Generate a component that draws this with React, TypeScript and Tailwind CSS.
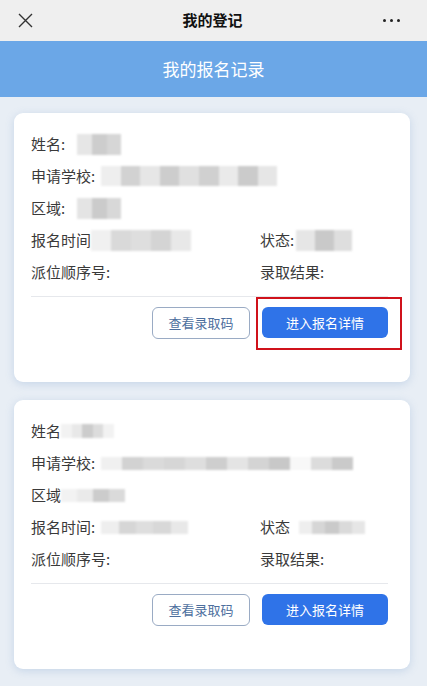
import type { ReactNode } from 'react';

type Blur = { w: number; tones: string[]; cls: string };

function Redacted({ w, tones, cls }: Blur) {
  return (
    <span className={`inline-flex overflow-hidden blur-[1px] ${cls}`} style={{ width: w }}>
      {tones.map((t, i) => (
        <span key={i} className="h-full flex-1" style={{ backgroundColor: t }} />
      ))}
    </span>
  );
}

function Row({ children }: { children: ReactNode }) {
  return <div className="flex h-8 items-center">{children}</div>;
}

type Record = {
  nameLabel: string;
  name: Blur;
  school: Blur;
  areaLabel: string;
  area: Blur;
  timeLabel: string;
  time: Blur;
  statusLabel: string;
  status: Blur;
  highlight?: boolean;
};

const records: Record[] = [
  {
    nameLabel: '姓名:',
    name: { w: 44, cls: 'ml-[12px] h-[21px]', tones: ['#e6e6e6', '#cdcdcd', '#d6d6d6'] },
    school: { w: 176, cls: 'ml-[6px] h-[20px]', tones: ['#eeeeee', '#d2d2d2', '#e6e6e6', '#cdcdcd', '#e0e0e0', '#d0d0d0', '#eaeaea', '#cbcbcb', '#e6e6e6'] },
    areaLabel: '区域:',
    area: { w: 44, cls: 'ml-[12px] h-[21px]', tones: ['#e4e4e4', '#cbcbcb', '#d8d8d8'] },
    timeLabel: '报名时间',
    time: { w: 100, cls: 'ml-0 h-[21px]', tones: ['#f0f0f0', '#d9d9d9', '#dedede', '#d4d4d4', '#e8e8e8'] },
    statusLabel: '状态:',
    status: { w: 56, cls: 'ml-[2px] h-[21px]', tones: ['#e6e6e6', '#c9c9c9', '#dedede'] },
    highlight: true,
  },
  {
    nameLabel: '姓名',
    name: { w: 53, cls: 'ml-0 h-[14px]', tones: ['#f2f2f2', '#e8e8e8', '#cccccc', '#dcdcdc', '#f2f2f2'] },
    school: { w: 252, cls: 'ml-[6px] h-[13px]', tones: ['#f0f0f0', '#d2d2d2', '#dadada', '#d6d6d6', '#dedede', '#cecece', '#e4e4e4', '#d4d4d4', '#c8c8c8', '#f8f8f8', '#dcdcdc', '#cacaca'] },
    areaLabel: '区域',
    area: { w: 64, cls: 'ml-0 h-[13px]', tones: ['#f2f2f2', '#eaeaea', '#cccccc', '#dadada'] },
    timeLabel: '报名时间:',
    time: { w: 87, cls: 'ml-[6px] h-[13px]', tones: ['#eeeeee', '#d6d6d6', '#dedede', '#d8d8d8', '#e8e8e8'] },
    statusLabel: '状态',
    status: { w: 66, cls: 'ml-[9px] h-[13px]', tones: ['#eeeeee', '#d6d6d6', '#cacaca', '#dadada', '#e6e6e6'] },
  },
];

function RecordCard({ r }: { r: Record }) {
  return (
    <div className="rounded-[9px] bg-white pb-[43px] pl-[17px] pr-[22px] pt-[15px] shadow-[0_2px_8px_rgba(110,150,200,0.28)]">
      <div className="text-[15px] text-[#3a3a3a]">
        <Row>
          <span className="shrink-0">{r.nameLabel}</span>
          <Redacted {...r.name} />
        </Row>
        <Row>
          <span className="shrink-0">申请学校:</span>
          <Redacted {...r.school} />
        </Row>
        <Row>
          <span className="shrink-0">{r.areaLabel}</span>
          <Redacted {...r.area} />
        </Row>
        <div className="grid h-8 grid-cols-[229px_1fr] items-center">
          <div className="flex items-center">
            <span className="shrink-0">{r.timeLabel}</span>
            <Redacted {...r.time} />
          </div>
          <div className="flex items-center">
            <span className="shrink-0">{r.statusLabel}</span>
            <Redacted {...r.status} />
          </div>
        </div>
        <div className="grid h-8 grid-cols-[229px_1fr] items-center">
          <span>派位顺序号:</span>
          <span>录取结果:</span>
        </div>
      </div>
      <div className="mt-2 h-px bg-[#e6e8ec]" />
      <div className="mt-[10px] flex justify-end gap-3">
        <button className="h-8 w-[98px] rounded-[6px] border border-[#9aabc4] bg-white text-[13px] text-[#4d6f9e]">
          查看录取码
        </button>
        <div className="relative">
          <button className="h-[31px] w-[126px] rounded-[6px] bg-[#2f73e8] text-[13px] text-white">
            进入报名详情
          </button>
          {r.highlight && (
            <div className="pointer-events-none absolute -bottom-[11px] -left-[6px] -right-[14px] -top-[10px] border-2 border-[#d0121b]" />
          )}
        </div>
      </div>
    </div>
  );
}

export default function App() {
  return (
    <div
      className="min-h-[686px] w-full bg-[#e8eef5]"
      style={{ fontFamily: '"Noto Sans CJK SC", "Noto Sans", sans-serif' }}
    >
      <header className="flex h-[41px] items-center justify-between bg-[#efefef] pl-[18px] pr-[27px]">
        <svg width="15" height="15" viewBox="0 0 15 15" className="text-[#333]">
          <path d="M1 1 L14 14 M14 1 L1 14" stroke="currentColor" strokeWidth="1.4" />
        </svg>
        <h1 className="ml-[9px] text-[15px] font-bold text-[#111]">我的登记</h1>
        <div className="flex w-[17px] justify-between">
          <span className="h-[3px] w-[3px] rounded-full bg-[#222]" />
          <span className="h-[3px] w-[3px] rounded-full bg-[#222]" />
          <span className="h-[3px] w-[3px] rounded-full bg-[#222]" />
        </div>
      </header>
      <div className="flex h-[56px] items-center justify-center bg-[#6ba7e7] text-[17px] text-white">
        我的报名记录
      </div>
      <main className="flex flex-col gap-[18px] pl-[14px] pr-[17px] pt-4">
        {records.map((r, i) => (
          <RecordCard key={i} r={r} />
        ))}
      </main>
    </div>
  );
}
